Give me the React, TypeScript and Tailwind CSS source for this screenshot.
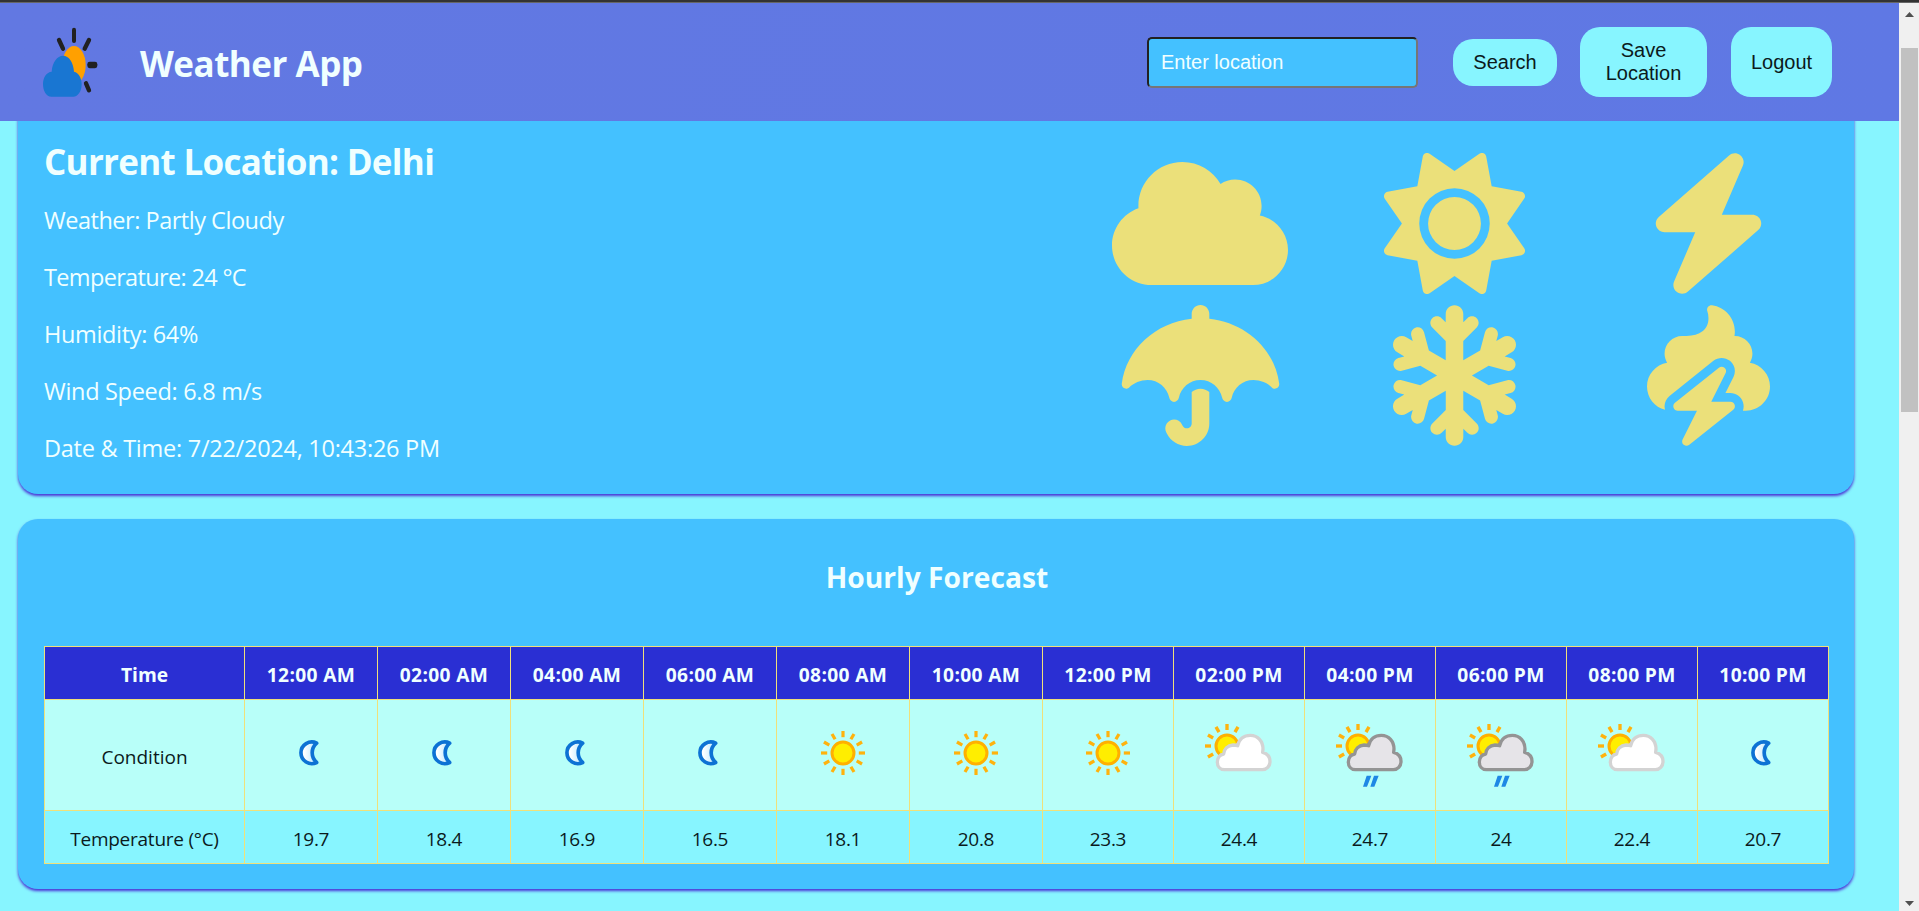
import React from "react";
import { FaBolt, FaCloud, FaPooStorm, FaSnowflake, FaSun, FaUmbrella } from "react-icons/fa6";

type Condition = "moon" | "sun" | "cloud" | "rain";

const hours: { time: string; condition: Condition; temp: string }[] = [
  { time: "12:00 AM", condition: "moon", temp: "19.7" },
  { time: "02:00 AM", condition: "moon", temp: "18.4" },
  { time: "04:00 AM", condition: "moon", temp: "16.9" },
  { time: "06:00 AM", condition: "moon", temp: "16.5" },
  { time: "08:00 AM", condition: "sun", temp: "18.1" },
  { time: "10:00 AM", condition: "sun", temp: "20.8" },
  { time: "12:00 PM", condition: "sun", temp: "23.3" },
  { time: "02:00 PM", condition: "cloud", temp: "24.4" },
  { time: "04:00 PM", condition: "rain", temp: "24.7" },
  { time: "06:00 PM", condition: "rain", temp: "24" },
  { time: "08:00 PM", condition: "cloud", temp: "22.4" },
  { time: "10:00 PM", condition: "moon", temp: "20.7" },
];

const details = [
  { text: "Weather: Partly Cloudy", tracking: "tracking-[-0.48px]" },
  { text: "Temperature: 24 °C", tracking: "tracking-[-0.66px]" },
  { text: "Humidity: 64%", tracking: "tracking-[-0.34px]" },
  { text: "Wind Speed: 6.8 m/s", tracking: "tracking-[-0.3px]" },
  { text: "Date & Time: 7/22/2024, 10:43:26 PM", tracking: "tracking-[-0.26px]" },
];

const gallery = [
  { Icon: FaCloud, width: "w-[176px]" },
  { Icon: FaSun, width: "w-[141px]" },
  { Icon: FaBolt, width: "w-[123px]" },
  { Icon: FaUmbrella, width: "w-[159px]" },
  { Icon: FaSnowflake, width: "w-[123px]" },
  { Icon: FaPooStorm, width: "w-[123px]" },
];

function Logo() {
  return (
    <svg viewBox="0 0 240 255" className="h-[85px] w-20 shrink-0">
      <g stroke="#212121" strokeLinecap="round" fill="none">
        <path strokeWidth="12" d="M132 29V63" />
        <path strokeWidth="13" d="M87 60L99 86M177 60L164 86M168 190L177 211" />
      </g>
      <rect x="172" y="125.500" width="30" height="19" rx="7" fill="#212121" />
      <ellipse cx="132" cy="135" rx="35" ry="57" fill="#ffa000" />
      <path
        fill="#1976d2"
        d="M65 155C67 126 82 107 99 107C117 107 130 126 132 155C146 158 155 173 155 192C155 214 144 230 130 230H64C49 230 39 213 39 192C39 172 50 156 65 155Z"
      />
    </svg>
  );
}

function Sun() {
  return (
    <svg viewBox="-40 -40 80 80" className="size-20">
      {Array.from({ length: 12 }, (_, i) => (
        <path key={i} d="M0 -15.800V-22" stroke="#ffb20d" strokeWidth="3.200" transform={`rotate(${i * 30})`} />
      ))}
      <circle r="11" fill="#ffee00" stroke="#ffb000" strokeWidth="3" />
    </svg>
  );
}

function Moon() {
  return (
    <svg viewBox="-58 -21 240 240" className="size-20">
      <defs>
        <linearGradient id="moonFill" x1="0" x2="1" y1="0" y2="0">
          <stop offset="0.2" stopColor="#ffffff" />
          <stop offset="0.8" stopColor="#c8ecff" />
        </linearGradient>
      </defs>
      <path
        d="M79 69.500A32.500 32.500 0 1 0 79 127.500A38 38 0 0 1 79 69.500Z"
        fill="url(#moonFill)"
        stroke="#0d72d4"
        strokeWidth="11"
        strokeLinejoin="round"
      />
    </svg>
  );
}

function CloudSun({ rain }: { rain?: boolean }) {
  return (
    <svg viewBox="27 9 240 240" className="size-20">
      {[-120, -90, -60, -30, 0, 30].map((a) => (
        <path
          key={a}
          d="M0 -48V-66"
          stroke="#ffb20d"
          strokeWidth="10"
          transform={`translate(111 108) rotate(${a})`}
        />
      ))}
      <circle cx="111" cy="108" r="33" fill="#ffee00" stroke="#ffb000" strokeWidth="9" />
      <path
        d="M103 179C90 179 82 169 82 156C82 143 90 134 101 132C101 118 113 106 129 105Q137 105 143 107C147 88 161 76 181 76C204 76 219 94 219 117L218 127C232 131 240 141 240 154C240 169 230 179 217 179Z"
        fill={rain ? "#e6e4e8" : "#ffffff"}
        stroke={rain ? "#949494" : "#d3d3d3"}
        strokeWidth="10"
        strokeLinejoin="round"
      />
      {rain && (
        <path d="M140 197H154L141 230H129ZM162 197H176L163 230H151Z" fill="#1e88e5" transform="translate(-3 0)" />
      )}
    </svg>
  );
}

function ConditionIcon({ kind }: { kind: Condition }) {
  if (kind === "moon") return <Moon />;
  if (kind === "sun") return <Sun />;
  return <CloudSun rain={kind === "rain"} />;
}

function Scrollbar() {
  return (
    <div className="flex w-5 shrink-0 flex-col items-center bg-[#f0f0f0]">
      <svg viewBox="0 0 9 5" className="mt-[9px] h-[5px] w-[9px]">
        <path d="M4.500 0L9 5H0Z" fill="#505050" />
      </svg>
      <div className="mt-[31px] h-[364px] w-[17px] bg-[#c1c1c1]" />
      <svg viewBox="0 0 9 5" className="mt-auto mb-[5px] h-[5px] w-[9px]">
        <path d="M4.500 5L9 0H0Z" fill="#505050" />
      </svg>
    </div>
  );
}

const cell = "border border-[#f0e07a] p-0 text-center";

export default function App() {
  return (
    <div className="flex h-[911px] w-full flex-col overflow-hidden bg-[#87f5ff] font-['Open_Sans','Noto_Sans',sans-serif] text-[#f0ffff]">
      <div className="h-[3px] shrink-0 border-b border-[#666666] bg-[#333333]" />
      <div className="flex min-h-0 flex-1">
        <main className="flex min-w-0 flex-1 flex-col">
          <header className="z-10 flex h-[118px] shrink-0 items-center bg-linear-to-r from-[#6278e2] to-[#5f78e4] pr-[67px] pl-[30px]">
            <Logo />
            <h1 className="ml-[30px] pt-1 text-[35px] leading-[48px] font-bold tracking-[-0.5px]">Weather App</h1>
            <div className="ml-auto flex items-center font-['Liberation_Sans',Arial,sans-serif] text-xl leading-[23px] text-[#0b1a1c]">
              <input
                placeholder="Enter location"
                className="h-[51px] w-[271px] rounded-[5px] border-2 border-t-[#212121] border-r-[#767676] border-b-[#767676] border-l-[#212121] bg-[#44c1ff] px-3 placeholder:text-[#f0ffff] placeholder:opacity-100"
              />
              <button className="ml-[35px] h-[47px] w-[104px] rounded-[20px] bg-[#87f5ff]">Search</button>
              <button className="ml-[23px] h-[70px] w-[127px] rounded-[20px] bg-[#87f5ff] px-5">Save Location</button>
              <button className="ml-6 h-[70px] w-[101px] rounded-[20px] bg-[#87f5ff]">Logout</button>
            </div>
          </header>

          <section className="-mt-5 mr-[45px] ml-[18px] flex h-[393px] shrink-0 justify-between rounded-b-[20px] bg-[#44c1ff] pt-5 pl-[26px] shadow-[0_2px_3px_#4b2fd6]">
            <div className="pt-[17px]">
              <h2 className="text-[35px] leading-[48px] font-bold tracking-[-0.7px]">Current Location: Delhi</h2>
              <div className="mt-[6px]">
                {details.map((d) => (
                  <p key={d.text} className={`text-[23.500px] leading-[57px] ${d.tracking}`}>
                    {d.text}
                  </p>
                ))}
              </div>
            </div>
            <div className="mt-8 mr-[19px] grid h-[293px] w-[762px] grid-cols-3 content-start justify-items-center gap-y-[11px] text-[#ebe07a]">
              {gallery.map(({ Icon, width }, i) => (
                <Icon key={i} className={`h-[141px] ${width}`} />
              ))}
            </div>
          </section>

          <section className="mt-[25px] mr-[45px] ml-[18px] h-[370px] shrink-0 rounded-[20px] bg-[#44c1ff] px-[26px] shadow-[0_2px_3px_#4b2fd6]">
            <h2 className="pt-[38px] pl-[2px] text-center text-[28.200px] leading-[40px] font-bold">Hourly Forecast</h2>
            <table className="mt-[49px] w-[1785px] table-fixed border-collapse text-[19px] leading-[26px] text-[#0b1a1c]">
              <colgroup>
                <col className="w-[200px]" />
                {hours.map((h, i) => (
                  <col key={h.time} className={i < 6 ? "w-[133px]" : "w-[131px]"} />
                ))}
              </colgroup>
              <thead>
                <tr className="h-[53px] bg-[#2a2fd3] text-[19.200px] text-[#f0ffff]">
                  <th className={`${cell} pt-[3px]`}>Time</th>
                  {hours.map((h) => (
                    <th key={h.time} className={`${cell} pt-[3px] tracking-[0.35px]`}>
                      {h.time}
                    </th>
                  ))}
                </tr>
              </thead>
              <tbody>
                <tr className="h-[111px] bg-[#b8fff9]">
                  <td className={`${cell} pt-[3px]`}>Condition</td>
                  {hours.map((h) => (
                    <td key={h.time} className={`${cell} pb-[5px]`}>
                      <div className="flex justify-center">
                        <ConditionIcon kind={h.condition} />
                      </div>
                    </td>
                  ))}
                </tr>
                <tr className="h-[53px] bg-[#87f5ff]">
                  <td className={`${cell} pt-[3px] tracking-[-0.25px]`}>Temperature (°C)</td>
                  {hours.map((h) => (
                    <td key={h.time} className={`${cell} pt-[3px] tracking-[-0.3px]`}>
                      {h.temp}
                    </td>
                  ))}
                </tr>
              </tbody>
            </table>
          </section>
        </main>
        <Scrollbar />
      </div>
    </div>
  );
}
